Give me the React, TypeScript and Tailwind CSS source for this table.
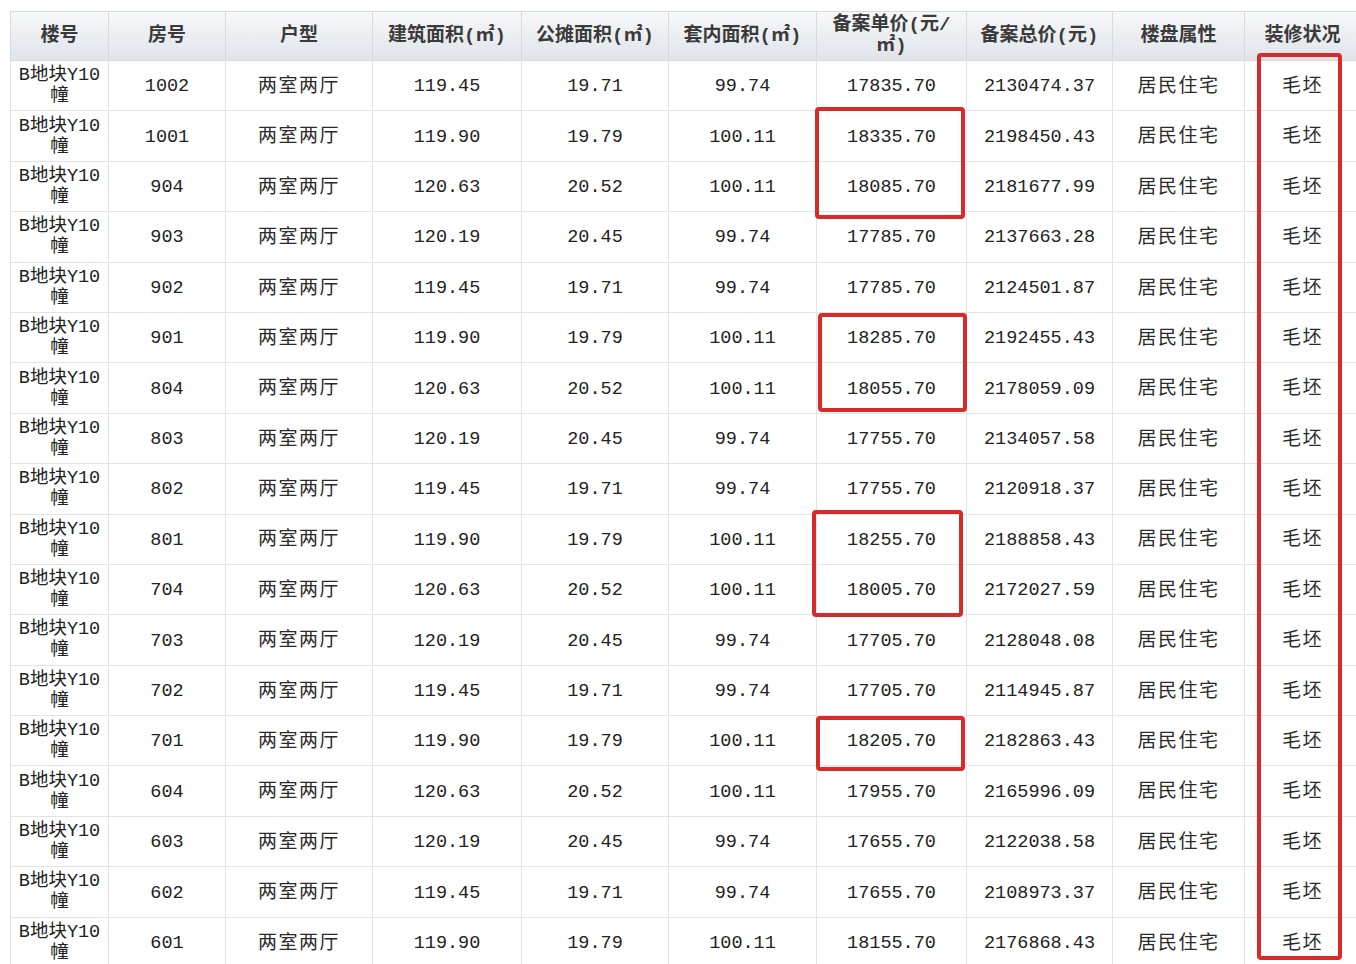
import React from 'react';

const mono = { fontFamily: '"Liberation Mono", "Noto Sans CJK SC", monospace' };

const rows: string[][] = [
  ['1002', '119.45', '19.71', '99.74', '17835.70', '2130474.37'],
  ['1001', '119.90', '19.79', '100.11', '18335.70', '2198450.43'],
  ['904', '120.63', '20.52', '100.11', '18085.70', '2181677.99'],
  ['903', '120.19', '20.45', '99.74', '17785.70', '2137663.28'],
  ['902', '119.45', '19.71', '99.74', '17785.70', '2124501.87'],
  ['901', '119.90', '19.79', '100.11', '18285.70', '2192455.43'],
  ['804', '120.63', '20.52', '100.11', '18055.70', '2178059.09'],
  ['803', '120.19', '20.45', '99.74', '17755.70', '2134057.58'],
  ['802', '119.45', '19.71', '99.74', '17755.70', '2120918.37'],
  ['801', '119.90', '19.79', '100.11', '18255.70', '2188858.43'],
  ['704', '120.63', '20.52', '100.11', '18005.70', '2172027.59'],
  ['703', '120.19', '20.45', '99.74', '17705.70', '2128048.08'],
  ['702', '119.45', '19.71', '99.74', '17705.70', '2114945.87'],
  ['701', '119.90', '19.79', '100.11', '18205.70', '2182863.43'],
  ['604', '120.63', '20.52', '100.11', '17955.70', '2165996.09'],
  ['603', '120.19', '20.45', '99.74', '17655.70', '2122038.58'],
  ['602', '119.45', '19.71', '99.74', '17655.70', '2108973.37'],
  ['601', '119.90', '19.79', '100.11', '18155.70', '2176868.43'],
];

const widths = [98, 117, 147, 149, 147, 148, 150, 146, 132, 116];
const total = widths.reduce((a, b) => a + b, 0);

function Th({ children }: { children: React.ReactNode }) {
  return (
    <th className="border border-[#d6d9de] px-0 text-center align-middle text-[19px] font-bold leading-[21px] text-[#3a3a3a]">
      {children}
    </th>
  );
}

function Td({ children, cjk }: { children: React.ReactNode; cjk?: boolean }) {
  return (
    <td
      className={
        cjk
          ? 'border border-[#e1e3e6] pt-[3px] text-center align-middle text-[19px] tracking-[1.5px] text-[#2a2a2a]'
          : 'border border-[#e1e3e6] pt-[3px] text-center align-middle text-[18.5px] text-[#222]'
      }
    >
      {children}
    </td>
  );
}

export default function App() {
  return (
    <div className="relative h-[964px] w-[1356px] overflow-hidden bg-white" style={mono}>
      <div className="pl-[10px] pt-[11px]">
        <table className="table-fixed border-collapse" style={{ width: total }}>
          <colgroup>
            {widths.map((w, i) => (
              <col key={i} style={{ width: w }} />
            ))}
          </colgroup>
          <thead>
            <tr className="h-[49px] bg-gradient-to-b from-[#f7f8fa] to-[#dfe3e8]">
              <Th>楼号</Th>
              <Th>房号</Th>
              <Th>户型</Th>
              <Th>建筑面积(㎡)</Th>
              <Th>公摊面积(㎡)</Th>
              <Th>套内面积(㎡)</Th>
              <Th>
                备案单价(元/
                <br />
                ㎡)
              </Th>
              <Th>备案总价(元)</Th>
              <Th>楼盘属性</Th>
              <Th>装修状况</Th>
            </tr>
          </thead>
          <tbody>
            {rows.map((r, i) => (
              <tr key={i} className="h-[50.4px] bg-white">
                <td className="border border-[#e1e3e6] pt-[1px] text-center align-middle text-[18.5px] leading-[21px] text-[#222]">
                  B地块Y10
                  <br />
                  幢
                </td>
                <Td>{r[0]}</Td>
                <Td cjk>两室两厅</Td>
                <Td>{r[1]}</Td>
                <Td>{r[2]}</Td>
                <Td>{r[3]}</Td>
                <Td>{r[4]}</Td>
                <Td>{r[5]}</Td>
                <Td cjk>居民住宅</Td>
                <Td cjk>毛坯</Td>
              </tr>
            ))}
          </tbody>
        </table>
      </div>

      {/* red annotation boxes */}
      <div className="absolute left-[815px] top-[107px] h-[112px] w-[150px] rounded-[4px] border-[4px] border-[#d92a2a]" />
      <div className="absolute left-[818px] top-[313px] h-[99px] w-[149px] rounded-[4px] border-[4px] border-[#d92a2a]" />
      <div className="absolute left-[812px] top-[510px] h-[107px] w-[151px] rounded-[4px] border-[4px] border-[#d92a2a]" />
      <div className="absolute left-[816px] top-[716px] h-[55px] w-[149px] rounded-[4px] border-[4px] border-[#d92a2a]" />
      <div className="absolute left-[1257px] top-[53px] h-[907px] w-[85px] rounded-[4px] border-[4px] border-[#d92a2a]" />
    </div>
  );
}
